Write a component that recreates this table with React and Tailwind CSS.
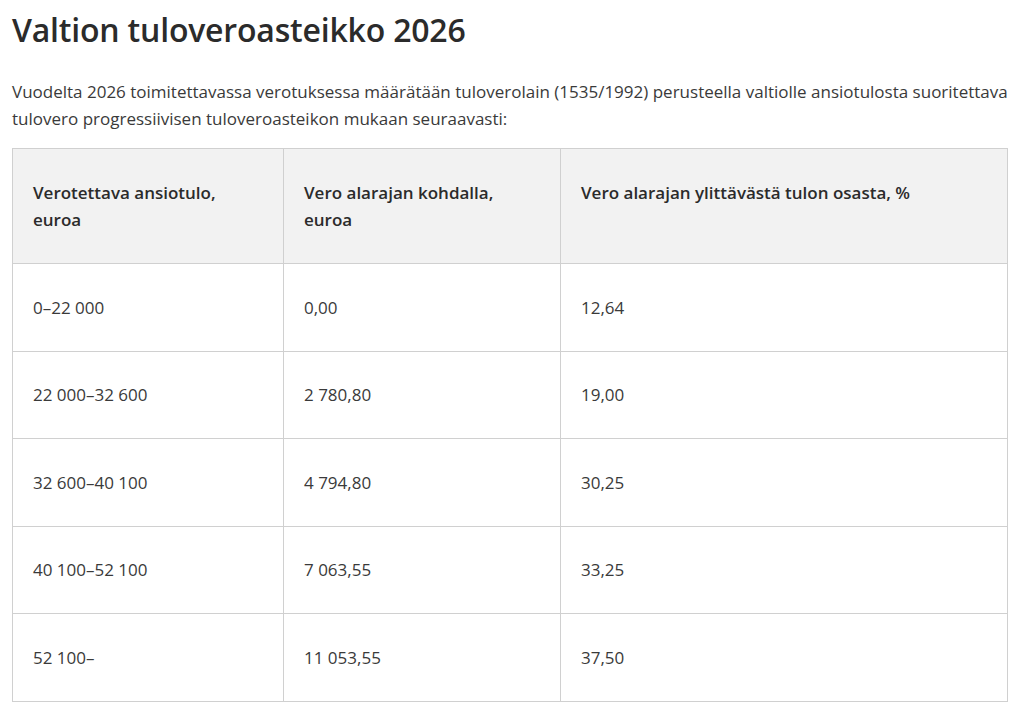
import React from 'react';

const rows = [
    ['0–22 000', '0,00', '12,64'],
    ['22 000–32 600', '2 780,80', '19,00'],
    ['32 600–40 100', '4 794,80', '30,25'],
    ['40 100–52 100', '7 063,55', '33,25'],
    ['52 100–', '11 053,55', '37,50'],
];

const App = () => {
    return (
        <div className="min-h-screen bg-white px-3 pt-[9px] text-[#333333]" style={{ fontFamily: '"Open Sans", "Noto Sans", sans-serif' }}>
            <h1 className="text-[32px] leading-[42px] font-semibold tracking-[-0.2px] text-[#2b2b2b]">
                Valtion tuloveroasteikko 2026
            </h1>

            <p className="mt-[27px] text-[17px] leading-[27px] text-[#3a3a3a]">
                Vuodelta 2026 toimitettavassa verotuksessa määrätään tuloverolain (1535/1992) perusteella valtiolle ansiotulosta suoritettava tulovero progressiivisen tuloveroasteikon mukaan seuraavasti:
            </p>

            {/* Table */}
            <table className="mt-[16px] w-[996px] border-collapse text-[17px] leading-[27px] text-[#3a3a3a]">
                <colgroup>
                    <col className="w-[271px]" />
                    <col className="w-[277px]" />
                    <col />
                </colgroup>
                <thead>
                    <tr className="bg-[#f2f2f2]">
                        <th className="h-[115px] border border-[#d0d0d0] px-5 pt-[30px] pb-[30px] text-left align-top font-semibold text-[#2b2b2b]">
                            Verotettava ansiotulo,<br />euroa
                        </th>
                        <th className="border border-[#d0d0d0] px-5 pt-[30px] pb-[30px] text-left align-top font-semibold text-[#2b2b2b]">
                            Vero alarajan kohdalla,<br />euroa
                        </th>
                        <th className="border border-[#d0d0d0] px-5 pt-[30px] pb-[30px] text-left align-top font-semibold text-[#2b2b2b]">
                            Vero alarajan ylittävästä tulon osasta, %
                        </th>
                    </tr>
                </thead>
                <tbody>
                    {rows.map((r, i) => (
                        <tr key={i}>
                            {r.map((c, j) => (
                                <td key={j} className="h-[87.5px] border border-[#d0d0d0] px-5 align-middle">
                                    {c}
                                </td>
                            ))}
                        </tr>
                    ))}
                </tbody>
            </table>
        </div>
    );
};

export default App;
